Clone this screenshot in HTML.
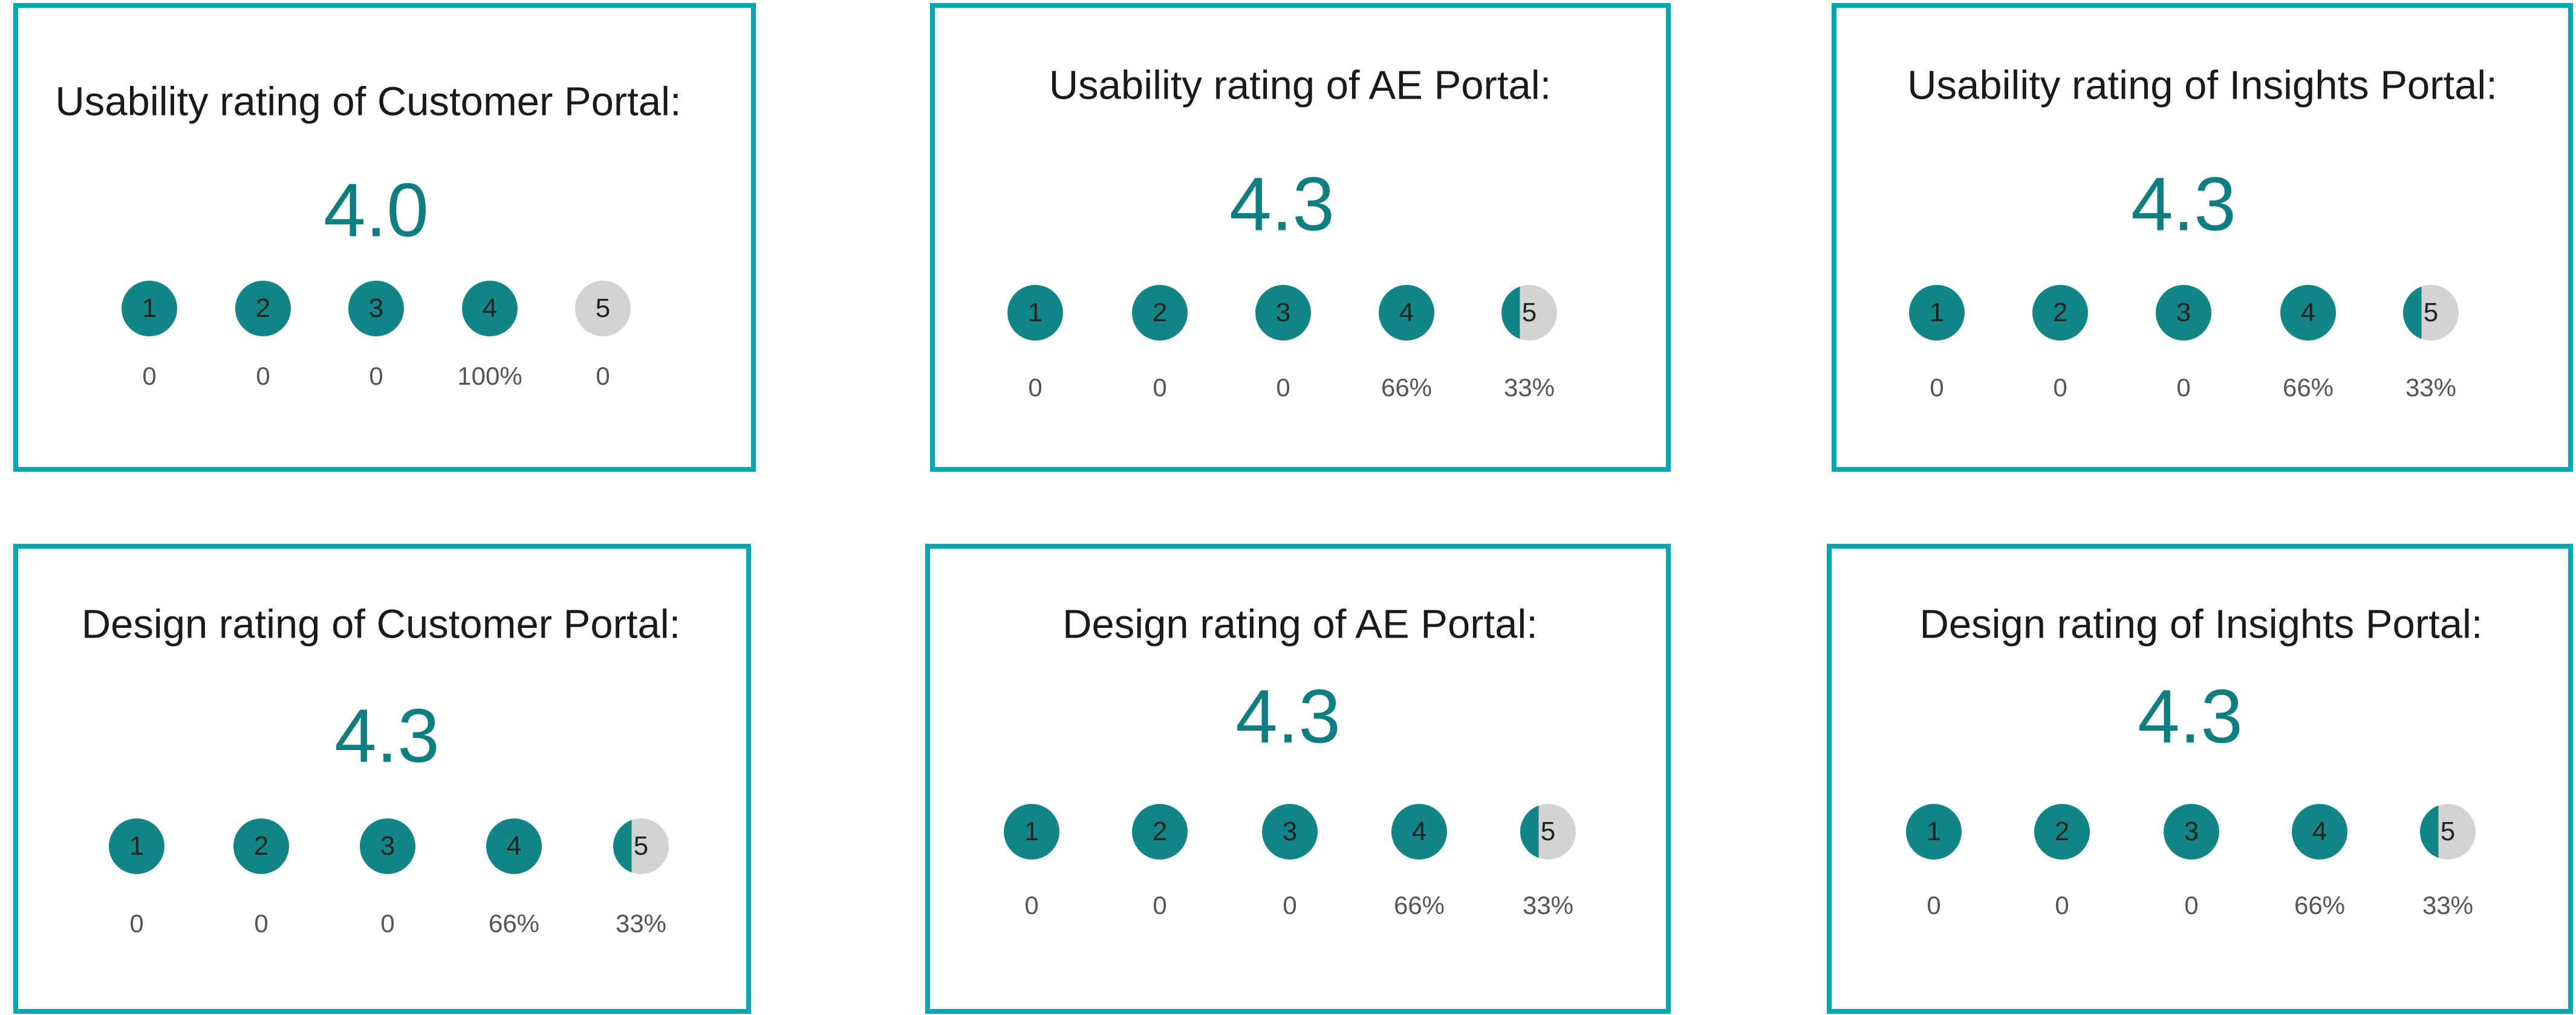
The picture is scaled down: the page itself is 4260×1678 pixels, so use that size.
<!DOCTYPE html>
<html><head><meta charset="utf-8"><style>
html,body{margin:0;padding:0;background:#fff;}
body{width:4260px;height:1678px;position:relative;overflow:hidden;font-family:"Liberation Sans",sans-serif;}
.box{position:absolute;border:8px solid #00a7b2;box-sizing:border-box;background:#fff;}
.t{position:absolute;transform:translate(-50%,-50%);white-space:nowrap;}
.title{font-size:67px;color:#1a1a1a;}
.num{font-size:125px;color:#0f7e80;}
.c{position:absolute;width:92px;height:92px;border-radius:50%;background:#128686;transform:translate(-50%,-50%);font-size:44px;color:#222;display:flex;align-items:center;justify-content:center;}
.g{background:#d4d3d3;}
.h{background:linear-gradient(to right,#128686 33%,#d4d3d3 33%);}
.l{font-size:42px;color:#555;}
</style></head><body>
<div class="box" style="left:22px;top:5px;width:1228px;height:775px"></div>
<div class="box" style="left:1538px;top:5px;width:1225px;height:775px"></div>
<div class="box" style="left:3029px;top:5px;width:1226px;height:775px"></div>
<div class="box" style="left:22px;top:899px;width:1220px;height:777px"></div>
<div class="box" style="left:1530px;top:899px;width:1233px;height:777px"></div>
<div class="box" style="left:3021px;top:899px;width:1234px;height:777px"></div>

<!-- Box1 -->
<div class="t title" style="left:609px;top:168px">Usability rating of Customer Portal:</div>
<div class="t num" style="left:622px;top:348px">4.0</div>
<div class="c" style="left:247px;top:510px">1</div><div class="c" style="left:435px;top:510px">2</div><div class="c" style="left:622px;top:510px">3</div><div class="c" style="left:810px;top:510px">4</div><div class="c g" style="left:997px;top:510px">5</div>
<div class="t l" style="left:247px;top:622px">0</div><div class="t l" style="left:435px;top:622px">0</div><div class="t l" style="left:622px;top:622px">0</div><div class="t l" style="left:810px;top:622px">100%</div><div class="t l" style="left:997px;top:622px">0</div>

<!-- Box2 -->
<div class="t title" style="left:2150px;top:141px">Usability rating of AE Portal:</div>
<div class="t num" style="left:2120px;top:338px">4.3</div>
<div class="c" style="left:1712px;top:517px">1</div><div class="c" style="left:1918px;top:517px">2</div><div class="c" style="left:2122px;top:517px">3</div><div class="c" style="left:2326px;top:517px">4</div><div class="c h" style="left:2529px;top:517px">5</div>
<div class="t l" style="left:1712px;top:641px">0</div><div class="t l" style="left:1918px;top:641px">0</div><div class="t l" style="left:2122px;top:641px">0</div><div class="t l" style="left:2326px;top:641px">66%</div><div class="t l" style="left:2529px;top:641px">33%</div>

<!-- Box3 -->
<div class="t title" style="left:3642px;top:141px">Usability rating of Insights Portal:</div>
<div class="t num" style="left:3611px;top:338px">4.3</div>
<div class="c" style="left:3203px;top:517px">1</div><div class="c" style="left:3407px;top:517px">2</div><div class="c" style="left:3611px;top:517px">3</div><div class="c" style="left:3817px;top:517px">4</div><div class="c h" style="left:4020px;top:517px">5</div>
<div class="t l" style="left:3203px;top:641px">0</div><div class="t l" style="left:3407px;top:641px">0</div><div class="t l" style="left:3611px;top:641px">0</div><div class="t l" style="left:3817px;top:641px">66%</div><div class="t l" style="left:4020px;top:641px">33%</div>

<!-- Box4 -->
<div class="t title" style="left:630px;top:1032px">Design rating of Customer Portal:</div>
<div class="t num" style="left:640px;top:1217px">4.3</div>
<div class="c" style="left:226px;top:1399px">1</div><div class="c" style="left:432px;top:1399px">2</div><div class="c" style="left:641px;top:1399px">3</div><div class="c" style="left:850px;top:1399px">4</div><div class="c h" style="left:1060px;top:1399px">5</div>
<div class="t l" style="left:226px;top:1527px">0</div><div class="t l" style="left:432px;top:1527px">0</div><div class="t l" style="left:641px;top:1527px">0</div><div class="t l" style="left:850px;top:1527px">66%</div><div class="t l" style="left:1060px;top:1527px">33%</div>

<!-- Box5 -->
<div class="t title" style="left:2150px;top:1032px">Design rating of AE Portal:</div>
<div class="t num" style="left:2130px;top:1185px">4.3</div>
<div class="c" style="left:1706px;top:1375px">1</div><div class="c" style="left:1918px;top:1375px">2</div><div class="c" style="left:2133px;top:1375px">3</div><div class="c" style="left:2347px;top:1375px">4</div><div class="c h" style="left:2560px;top:1375px">5</div>
<div class="t l" style="left:1706px;top:1497px">0</div><div class="t l" style="left:1918px;top:1497px">0</div><div class="t l" style="left:2133px;top:1497px">0</div><div class="t l" style="left:2347px;top:1497px">66%</div><div class="t l" style="left:2560px;top:1497px">33%</div>

<!-- Box6 -->
<div class="t title" style="left:3640px;top:1032px">Design rating of Insights Portal:</div>
<div class="t num" style="left:3622px;top:1185px">4.3</div>
<div class="c" style="left:3198px;top:1375px">1</div><div class="c" style="left:3410px;top:1375px">2</div><div class="c" style="left:3624px;top:1375px">3</div><div class="c" style="left:3836px;top:1375px">4</div><div class="c h" style="left:4048px;top:1375px">5</div>
<div class="t l" style="left:3198px;top:1497px">0</div><div class="t l" style="left:3410px;top:1497px">0</div><div class="t l" style="left:3624px;top:1497px">0</div><div class="t l" style="left:3836px;top:1497px">66%</div><div class="t l" style="left:4048px;top:1497px">33%</div>
</body></html>
